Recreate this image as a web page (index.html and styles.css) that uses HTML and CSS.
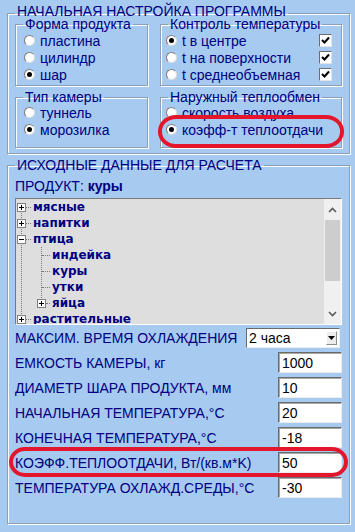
FILE: index.html
```html
<!DOCTYPE html>
<html>
  <head>
    <meta charset="utf-8" />
    <title>Начальная настройка программы</title>
    <link rel="stylesheet" href="styles.css">
  </head>

  <body>
    <div class="app">
      <!-- верхний блок: настройки -->
      <fieldset class="box outer top">
        <legend>НАЧАЛЬНАЯ НАСТРОЙКА ПРОГРАММЫ</legend>
        <div class="cols">
          <fieldset class="box left">
            <legend>Форма продукта</legend>
            <div class="opt"><span class="radio"></span>пластина</div>
            <div class="opt"><span class="radio"></span>цилиндр</div>
            <div class="opt"><span class="radio on"></span>шар</div>
          </fieldset>

          <fieldset class="box right">
            <legend>Контроль температуры</legend>
            <div class="opt"><span class="radio on"></span><span class="txt">t в центре</span><span class="check"></span></div>
            <div class="opt"><span class="radio"></span><span class="txt">t на поверхности</span><span class="check"></span></div>
            <div class="opt"><span class="radio"></span><span class="txt">t среднеобъемная</span><span class="check"></span></div>
          </fieldset>

          <fieldset class="box left low">
            <legend>Тип камеры</legend>
            <div class="opt"><span class="radio"></span>туннель</div>
            <div class="opt"><span class="radio on"></span>морозилка</div>
          </fieldset>

          <fieldset class="box right low">
            <legend>Наружный теплообмен</legend>
            <div class="opt"><span class="radio"></span>скорость воздуха</div>
            <div class="opt"><span class="radio on"></span>коэфф-т теплоотдачи</div>
          </fieldset>
        </div>
      </fieldset>

      <!-- нижний блок: исходные данные -->
      <fieldset class="box outer data">
        <legend>ИСХОДНЫЕ ДАННЫЕ ДЛЯ РАСЧЕТА</legend>
        <p class="product">ПРОДУКТ: <b>куры</b></p>

        <div class="tree">
          <ul class="lvl0">
            <li><div class="row"><span class="pm"></span><span class="dash"></span><b>мясные</b></div></li>
            <li><div class="row"><span class="pm"></span><span class="dash"></span><b>напитки</b></div></li>
            <li>
              <div class="row"><span class="pm minus"></span><span class="dash"></span><b>птица</b></div>
              <ul class="lvl1">
                <li><div class="row leaf"><span class="dash"></span><b>индейка</b></div></li>
                <li><div class="row leaf"><span class="dash"></span><b>куры</b></div></li>
                <li><div class="row leaf"><span class="dash"></span><b>утки</b></div></li>
                <li><div class="row sub"><span class="pm"></span><span class="dash"></span><b>яйца</b></div></li>
              </ul>
            </li>
            <li><div class="row"><span class="pm"></span><span class="dash"></span><b>растительные</b></div></li>
          </ul>
          <div class="sb">
            <span class="sb-btn"><svg width="9" height="6" viewBox="0 0 9 6"><polyline points="1,5 4.5,1.5 8,5" fill="none" stroke="#5a5a5a" stroke-width="1.6"/></svg></span>
            <span class="sb-thumb"></span>
            <span class="sb-track"></span>
            <span class="sb-btn"><svg width="9" height="6" viewBox="0 0 9 6"><polyline points="1,1 4.5,4.5 8,1" fill="none" stroke="#5a5a5a" stroke-width="1.6"/></svg></span>
          </div>
        </div>

        <div class="form">
          <div class="frow first">
            <span class="lbl">МАКСИМ. ВРЕМЯ ОХЛАЖДЕНИЯ</span>
            <div class="combo"><span>2 часа</span><span class="drop"></span></div>
          </div>
          <div class="frow"><span class="lbl">ЕМКОСТЬ КАМЕРЫ, кг</span><span class="inp">1000</span></div>
          <div class="frow"><span class="lbl">ДИАМЕТР ШАРА ПРОДУКТА, мм</span><span class="inp">10</span></div>
          <div class="frow"><span class="lbl">НАЧАЛЬНАЯ ТЕМПЕРАТУРА,°C</span><span class="inp">20</span></div>
          <div class="frow"><span class="lbl">КОНЕЧНАЯ ТЕМПЕРАТУРА,°C</span><span class="inp">-18</span></div>
          <div class="frow"><span class="lbl">КОЭФФ.ТЕПЛООТДАЧИ, Вт/(кв.м*K)</span><span class="inp">50</span></div>
          <div class="frow"><span class="lbl">ТЕМПЕРАТУРА ОХЛАЖД.СРЕДЫ,°C</span><span class="inp">-30</span></div>
        </div>
      </fieldset>

      <!-- красные пометки поверх формы -->
      <span class="mark mark1"></span>
      <span class="mark mark2"></span>
    </div>
  </body>
</html>
```

FILE: styles.css
```css
/* общее */
* {
  box-sizing: border-box;
}
body {
  margin: 0;
  background: #a6caf0;
  font-family: "Liberation Sans", Arial, sans-serif;
  font-size: 14px;
  color: #000080;
}
.app {
  position: relative;
  width: 355px;
  height: 532px;
  padding: 5px 5px 0 7px;
}

/* рамки групп */
.box {
  margin: 0;
  min-width: 0;
  border: 1px solid #8aa0b8;
  box-shadow: 1px 1px 0 #fff, inset 1px 1px 0 #fff;
}
.box legend {
  padding: 0 2px;
  line-height: 12px;
  white-space: nowrap;
}

.outer {
  width: 343px;
  padding: 0 7px;
}
.outer > legend {
  margin-left: 0;
}
/* заголовок верхней рамки стоит чуть выше линии */
.top > legend {
  padding-bottom: 4px;
}
.top {
  padding-bottom: 5px;
}
.data {
  margin-top: 5px;
  padding-bottom: 25px;
}

.cols {
  display: grid;
  grid-template-columns: 133px 182px;
  column-gap: 12px;
  row-gap: 5px;
  margin-top: -3px;
}
.left {
  padding: 2px 0 2px 8px;
}
.left > legend {
  margin-left: -1px;
}
.right {
  padding: 2px 9px 2px 5px;
}
.right > legend {
  margin-left: 2px;
}
.low {
  padding-top: 1px;
  padding-bottom: 9px;
}

/* радио и чекбоксы */
.opt {
  display: flex;
  align-items: center;
  height: 17px;
  white-space: nowrap;
}
.radio {
  flex: none;
  position: relative;
  width: 11px;
  height: 11px;
  margin-right: 5px;
  border-radius: 50%;
  border: 1px solid;
  border-color: #7c7c7c #dcdcdc #dcdcdc #7c7c7c;
  background: #fff;
}
.radio.on::after {
  content: "";
  position: absolute;
  left: 2px;
  top: 2px;
  width: 5px;
  height: 5px;
  border-radius: 50%;
  background: #000;
}
.txt {
  flex: 1;
}
.check {
  flex: none;
  width: 13px;
  height: 13px;
  border: 1px solid;
  border-color: #6e6e6e #e4e4e4 #e4e4e4 #6e6e6e;
  background: #fff
    url("data:image/svg+xml,%3Csvg xmlns='http://www.w3.org/2000/svg' width='11' height='11'%3E%3Cpolyline points='2,5 4.5,7.5 9,2.5' fill='none' stroke='%23000' stroke-width='2'/%3E%3C/svg%3E")
    no-repeat center;
}

/* продукт */
.product {
  margin: 7px 0 0;
  line-height: 16px;
}

/* дерево продуктов */
.tree {
  display: flex;
  height: 127px;
  margin-top: 4px;
  border: 1px solid;
  border-color: #7a7a7a #fff #fff #7a7a7a;
  background: #dedede;
  overflow: hidden;
}
.tree ul {
  margin: 0;
  padding: 0;
  list-style: none;
}
.lvl0 {
  flex: 1;
  background: repeating-linear-gradient(#7a7a7a 0 1px, transparent 1px 2px) no-repeat 5px 8px / 1px calc(100% - 16px);
}
.lvl1 {
  background: repeating-linear-gradient(#7a7a7a 0 1px, transparent 1px 2px) no-repeat 25px 0 / 1px calc(100% - 8px);
}
.row {
  display: flex;
  align-items: center;
  height: 16px;
  padding-left: 1px;
  font-family: "DejaVu Sans", Verdana, sans-serif;
  font-size: 12px;
}
.row b {
  margin-left: 2px;
}
.leaf {
  padding-left: 26px;
}
.sub {
  padding-left: 21px;
}
.pm {
  flex: none;
  width: 9px;
  height: 9px;
  border: 1px solid #808080;
  background:
    linear-gradient(#000, #000) no-repeat center / 5px 1px,
    linear-gradient(#000, #000) no-repeat center / 1px 5px,
    #fff;
}
.pm.minus {
  background:
    linear-gradient(#000, #000) no-repeat center / 5px 1px,
    #fff;
}
.dash {
  width: 5px;
  border-top: 1px dotted #7a7a7a;
}
.leaf .dash {
  width: 8px;
}
.sub .dash {
  width: 4px;
}

/* полоса прокрутки */
.sb {
  display: flex;
  flex-direction: column;
  width: 17px;
  background: #f0f0f0;
}
.sb-btn {
  display: flex;
  align-items: center;
  justify-content: center;
  height: 21px;
}
.sb-thumb {
  height: 61px;
  margin: 0 1px;
  background: #cdcdcd;
}
.sb-track {
  flex: 1;
}

/* поля ввода */
.form {
  display: flex;
  flex-direction: column;
  gap: 4px;
  margin-top: 3px;
}
.frow {
  display: flex;
  align-items: center;
  height: 21px;
  white-space: nowrap;
}
.frow.first {
  height: 20px;
}
.lbl {
  flex: 1;
}
.inp {
  width: 64px;
  height: 21px;
  padding: 1px 0 0 3px;
  border: 1px solid;
  border-color: #6a6a6a #ececec #ececec #6a6a6a;
  box-shadow: inset 1px 1px 0 #a8a8a8;
  background: #fff;
  color: #000;
  line-height: 18px;
}
.combo {
  display: flex;
  align-items: center;
  justify-content: space-between;
  width: 94px;
  height: 20px;
  margin-right: 2px;
  padding: 0 2px 0 2px;
  border: 1px solid;
  border-color: #6a6a6a #ececec #ececec #6a6a6a;
  background: #fff;
  color: #000;
}
.drop {
  width: 11px;
  height: 14px;
  border: 1px solid;
  border-color: #fff #8a8a8a #8a8a8a #fff;
  background: #ececec
    url("data:image/svg+xml,%3Csvg xmlns='http://www.w3.org/2000/svg' width='7' height='4'%3E%3Cpolygon points='0,0 7,0 3.5,4' fill='%23000'/%3E%3C/svg%3E")
    no-repeat center;
}

/* красные пометки */
.mark {
  position: absolute;
  border: 4px solid #e3162c;
}
.mark1 {
  left: 158px;
  top: 115px;
  width: 186px;
  height: 33px;
  border-radius: 18px / 16px;
}
.mark2 {
  left: 9px;
  top: 447px;
  width: 339px;
  height: 30px;
  border-radius: 16px / 15px;
}
```
